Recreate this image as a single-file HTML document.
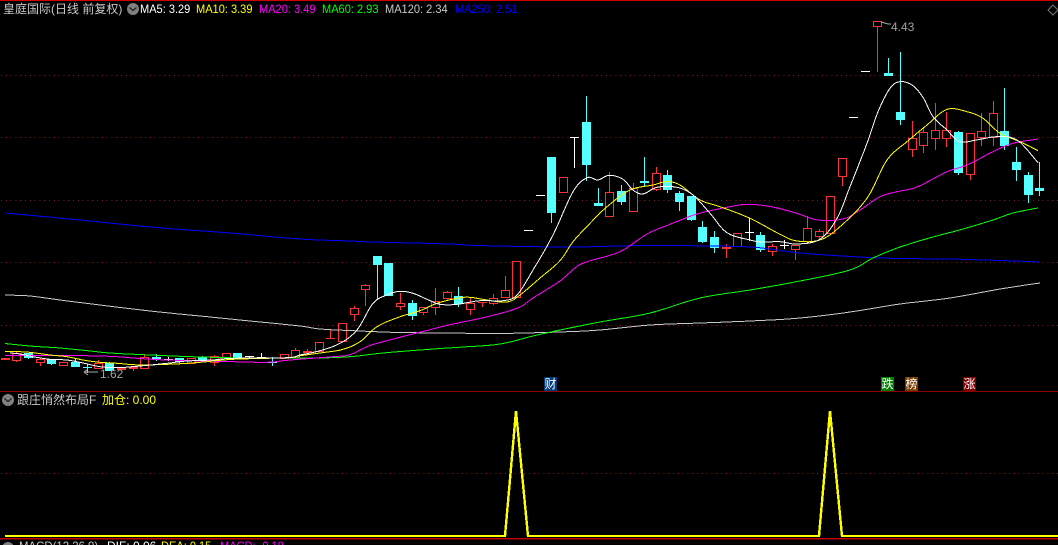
<!DOCTYPE html>
<html>
<head>
<meta charset="utf-8">
<style>
html,body{margin:0;padding:0;background:#000;width:1058px;height:545px;overflow:hidden;}
#w{position:relative;width:1058px;height:545px;overflow:hidden;background:#000;font-family:"Liberation Sans","WenQuanYi Zen Hei","Noto Sans CJK SC",sans-serif;font-size:12px;}
svg{position:absolute;left:0;top:0;}
.t{position:absolute;white-space:nowrap;line-height:14px;height:14px;}
.x{transform:scaleX(.92);transform-origin:0 0;}
.tag{position:absolute;width:13px;height:14px;line-height:14px;text-align:center;font-size:12px;color:#fff;}
</style>
</head>
<body>
<div id="w">
<svg width="1058" height="545" viewBox="0 0 1058 545" shape-rendering="crispEdges">
<rect x="0" y="0" width="1058" height="1" fill="#d00000"/>
<g stroke="#8a1a1a" stroke-width="1" stroke-dasharray="1 3.8" fill="none">
<path d="M1 75.5H1058M1 137.5H1058M1 200.5H1058M1 262.5H1058M1 325.5H1058M1 473.5H1058"/>
</g>
<rect x="0" y="391" width="1058" height="1" fill="#8c0000"/>
<rect x="0" y="538" width="1058" height="1.5" fill="#c00000"/>
<g id="c"></g>
<polyline class="sm" fill="none" stroke="#0000ff" points="5,213 80,220 150,227 230,233 300,239 350,241 372,242 450,244 476,245.5 560,247 600,246.5 650,245.5 740,246.5 770,249 800,253 860,257 900,258.5 950,259 1000,260.5 1040,262"/>
<polyline class="sm" fill="none" stroke="#c8c8c8" points="5,295 30,296 60,300 100,305 150,311 200,316 250,321 300,326 320,329 360,331 400,332.5 470,333.3 500,333.5 560,332 600,330 650,325 700,323 750,321 800,318 850,312 900,304 950,298 1000,289 1040,283"/>
<polyline class="sm" fill="none" stroke="#00ff00" points="5,343.5 30,346 60,348 90,351 110,353 150,355 200,357 250,358 313,358 350,356.7 383,353 433,349 463,347 500,344 533,336 560,330 600,322 650,313 700,298 750,290 800,281 850,270 873,258 900,247 933,237 963,229 993,220 1013,213 1038,208"/>
<polyline class="sm" fill="none" stroke="#ff00ff" points="5,355.7 83,355.7 117,356.7 133,358 167,360 233,361.7 267,362.3 290,360 333,356.7 350,354.7 367,346.7 383,341.7 417,333 450,324.7 483,317.7 517,308.3 533,298 560,281 575,268 587,261.7 620,251.7 647,234 670,224.3 697,214 727,207.3 747,204.3 767,206 780,208.7 797,213.3 818,220 843,219 860,210 880,196.7 897,191.7 917,187 947,171.7 967,165 993,151.7 1013,143.3 1038,139"/>
<polyline class="sm" fill="none" stroke="#ffff00" points="5,351.7 20,351.7 33,352.7 50,355 67,356.7 83,360 100,362.3 117,363.3 140,365 167,364.3 187,363.3 207,361.7 233,359.3 287,357.7 300,355.7 320,353 343,349.3 360,341.7 377,326.7 400,316.7 420,310.7 437,303.3 457,298.3 470,297.3 487,300 507,302 520,295 540,278 560,260.7 573,241.7 590,223.3 607,206.7 630,190 653,185 667,181.7 680,185 700,200 720,206.7 750,218.3 780,234.3 797,241 820,240 840,226.7 867,198.3 887,160 907,141.7 927,125 947,109.3 967,111.7 983,118.3 1000,133.3 1020,141.7 1038,150.7"/>
<polyline class="sm" fill="none" stroke="#ffffff" points="10,353 20,354 33,356.7 50,359.3 67,360 83,363 100,366.7 117,367.7 140,366 167,363.3 187,361 213,360 233,358.3 287,357.7 300,355 320,350.7 340,343.3 357,330 373,303.3 387,295 400,291.3 413,293.3 427,299.3 440,304.3 457,304.3 480,300.7 503,300.7 517,295 533,270 553,235 573,191.7 587,177.7 598,180 609,175.3 623,179.3 633,190 643,194 657,187.3 677,187.3 693,195 710,213.3 727,232.7 750,240 763,242 780,241.7 797,244 820,239.3 837,218.3 850,186.7 867,143.3 878,111.7 890,88.3 900,81.7 912,85 923,97.3 933,116.7 947,130 960,141.7 980,139.3 997,136.7 1017,140 1038,162.7"/>
<polyline fill="none" stroke="#ffff00" stroke-width="2.4" points="5,536 505,536 516,411 528,536 819,536 830,411 842,536 1058,536"/>
<path d="M1053 5l5 5-5 5-5-5z" fill="none" stroke="#777" shape-rendering="auto"/>
<path d="M881 22l7 2h3M84 372l4-3M84 372l4 3M84 372h14" fill="none" stroke="#aaa" stroke-width="1" shape-rendering="auto"/>
<circle cx="133" cy="9" r="6" fill="#808080" shape-rendering="auto"/>
<path d="M129.5 7.5l3.5 3 3.5-3" fill="none" stroke="#222" stroke-width="1.3" shape-rendering="auto"/>
<circle cx="8" cy="400" r="6" fill="#808080" shape-rendering="auto"/>
<path d="M4.5 398.5l3.5 3 3.5-3" fill="none" stroke="#222" stroke-width="1.3" shape-rendering="auto"/>
<circle cx="8" cy="548" r="6" fill="#808080" shape-rendering="auto"/>
</svg>

<div class="t" style="left:3px;top:2px;color:#c8c8c8;">皇庭国际(日线 前复权)</div>
<div class="t x" style="left:140px;top:2px;color:#fff;">MA5: 3.29</div>
<div class="t x" style="left:196px;top:2px;color:#ff0;">MA10: 3.39</div>
<div class="t x" style="left:259px;top:2px;color:#f0f;">MA20: 3.49</div>
<div class="t x" style="left:322px;top:2px;color:#0f0;">MA60: 2.93</div>
<div class="t x" style="left:385px;top:2px;color:#c8c8c8;">MA120: 2.34</div>
<div class="t x" style="left:455px;top:2px;color:#0000ff;">MA250: 2.51</div>

<div class="t" style="left:891px;top:20px;color:#a0a0a0;">4.43</div>
<div class="t" style="left:100px;top:367px;color:#a0a0a0;">1.62</div>

<div class="tag" style="left:544px;top:377px;background:#003a78;">财</div>
<div class="tag" style="left:881px;top:377px;background:#008000;">跌</div>
<div class="tag" style="left:905px;top:377px;background:#7a3c00;">榜</div>
<div class="tag" style="left:963px;top:377px;background:#800000;">涨</div>

<div class="t" style="left:17px;top:393px;color:#c8c8c8;">跟庄悄然布局F</div>
<div class="t" style="left:102px;top:393px;color:#ff0;">加仓: 0.00</div>

<div class="t x" style="left:19px;top:539px;color:#c8c8c8;transform:scaleX(.95);">MACD(12,26,9)</div>
<div class="t" style="left:107px;top:539px;color:#fff;">DIF: 0.06</div>
<div class="t x" style="left:161px;top:539px;color:#ff0;">DEA: 0.15</div>
<div class="t x" style="left:220px;top:539px;color:#f0f;">MACD: -0.18</div>
</div>

<script>
var R="#ff3232",C="#54ffff",W="#ffffff";
var d=[
[5.5,358,360,358,360,'r'],[16,352,362,353,360,'h'],[28,353,359,353,358,'c'],[40,358,366,359,362,'h'],[51,359,365,359.5,364,'c'],[63,362,365,362,365,'h'],[75,358,367,362,367,'c'],[87,364,373,367,368,'c'],[98,360,368,363,368,'h'],[109,362,371,363,371,'c'],[121,367,370,368,370,'r'],[133,367,371,367,369,'r'],[144,354,368,357,368,'h'],[156,354,361,357,359,'c'],[168,357,361,359,360,'w'],[179,358,363,358,362,'c'],[191,358,363,358,363,'h'],[202,356,361,357,361,'c'],[214,355,366,356,362,'h'],[226,353,357,353,357,'h'],[237,353,358,353,358,'c'],[249,356,358,356,358,'w'],[261,353,358,357,358,'w'],[272,357,366,362,363,'c'],[284,354,358,354,358,'h'],[295,348,357,350,357,'h'],
[307,349,355,351,353,'r'],[319,342,351,342,351,'h'],[330,329,339,338,339,'r'],[342,323,341,323,341,'h'],[354,306,321,308,314,'h'],[365,284,306,285,289,'h'],[377,256,300,256,265,'c'],[388,263,296,263,296,'c'],[400,293,310,303,306,'h'],[412,300,320,303,316,'c'],[423,307,315,307,312,'h'],[435,288,315,301,307,'h'],[447,291,300,292,298,'h'],[458,287,307,296,304,'c'],[470,297,315,303,309,'h'],[482,302,307,302,303,'r'],[493,294,305,298,303,'h'],[505,276,297,290,297,'h'],[516,261,297,261,297,'h'],
[528,230,230,230,230,'w'],[540,195,195,195,195,'w'],
[551,157,223,157,213,'c'],[563,177,192,177,192,'h'],[574,137,168,137,137,'w'],[586,96,181,122,165,'c'],[598,188,206,203,206,'c'],[609,172,216,192,216,'h'],[621,185,205,191,202,'c'],[633,183,212,188,211,'h'],[644,157,187,181,183,'c'],[656,167,191,173,189,'h'],[667,170,193,175,190,'c'],[679,191,211,193,202,'c'],[691,196,221,196,220,'c'],[702,221,243,227,242,'c'],[714,231,253,237,248,'c'],[726,244,258,247,249,'r'],[737,233,246,233,246,'h'],[749,218,241,232,232,'w'],[760,232,252,235,250,'c'],[772,244,256,246,251,'h'],[784,240,249,245,245,'w'],
[795,245,260,245,249,'h'],[807,216,241,228,241,'h'],[819,229,240,231,236,'h'],[830,196,233,196,233,'h'],[842,158,186,158,176,'h'],[853,117,117,117,117,'w'],[865,71,71,71,71,'w'],[877,21,72,21,26,'h'],[888,58,76,73,76,'c'],[900,52,125,112,120,'c'],[912,121,157,138,149,'h'],[923,127,153,132,145,'h'],[935,103,150,130,138,'h'],[946,112,147,130,138,'h'],[958,131,175,132,173,'c'],[970,133,180,133,174,'h'],[981,113,146,131,137,'h'],[993,101,146,113,137,'h'],[1004,88,150,131,146,'c'],[1016,147,181,162,170,'c'],[1028,172,203,175,195,'c'],[1039,162,196,188,191,'c']
];
var h='';
d.forEach(function(a){
 var x=Math.floor(a[0]),hi=a[1],lo=a[2],t=Math.floor(a[3]),b=Math.floor(a[4]),k=a[5];
 var col=k=='c'?C:(k=='w'?W:R);
 if(lo>hi){h+='<rect x="'+x+'" y="'+hi+'" width="1" height="'+(lo-hi)+'" fill="'+col+'"/>';}
 if(k=='h'){h+='<rect x="'+(x-4+.5)+'" y="'+(t+.5)+'" width="8" height="'+(b-t)+'" fill="#000" stroke="'+R+'"/>';}
 else if(k=='w'){h+='<rect x="'+(x-4)+'" y="'+t+'" width="9" height="1" fill="'+W+'"/>';}
 else{h+='<rect x="'+(x-4)+'" y="'+t+'" width="9" height="'+Math.max(b-t,1)+'" fill="'+col+'"/>';}
});
document.getElementById('c').innerHTML=h;
[].forEach.call(document.querySelectorAll('.sm'),function(p){
 var q=p.getAttribute('points').trim().split(/\s+/).map(function(s){return s.split(',').map(Number);});
 var o=[];
 for(var i=0;i<q.length-1;i++){
  var a=q[Math.max(i-1,0)],b=q[i],c=q[i+1],e=q[Math.min(i+2,q.length-1)];
  for(var j=0;j<6;j++){
   var u=j/6,u2=u*u,u3=u2*u;
   var f=function(n){return .5*(2*b[n]+(c[n]-a[n])*u+(2*a[n]-5*b[n]+4*c[n]-e[n])*u2+(3*b[n]-a[n]-3*c[n]+e[n])*u3);};
   o.push(f(0).toFixed(1)+','+f(1).toFixed(1));
  }
 }
 o.push(q[q.length-1].join(','));
 p.setAttribute('points',o.join(' '));
});
</script>
</body>
</html>
